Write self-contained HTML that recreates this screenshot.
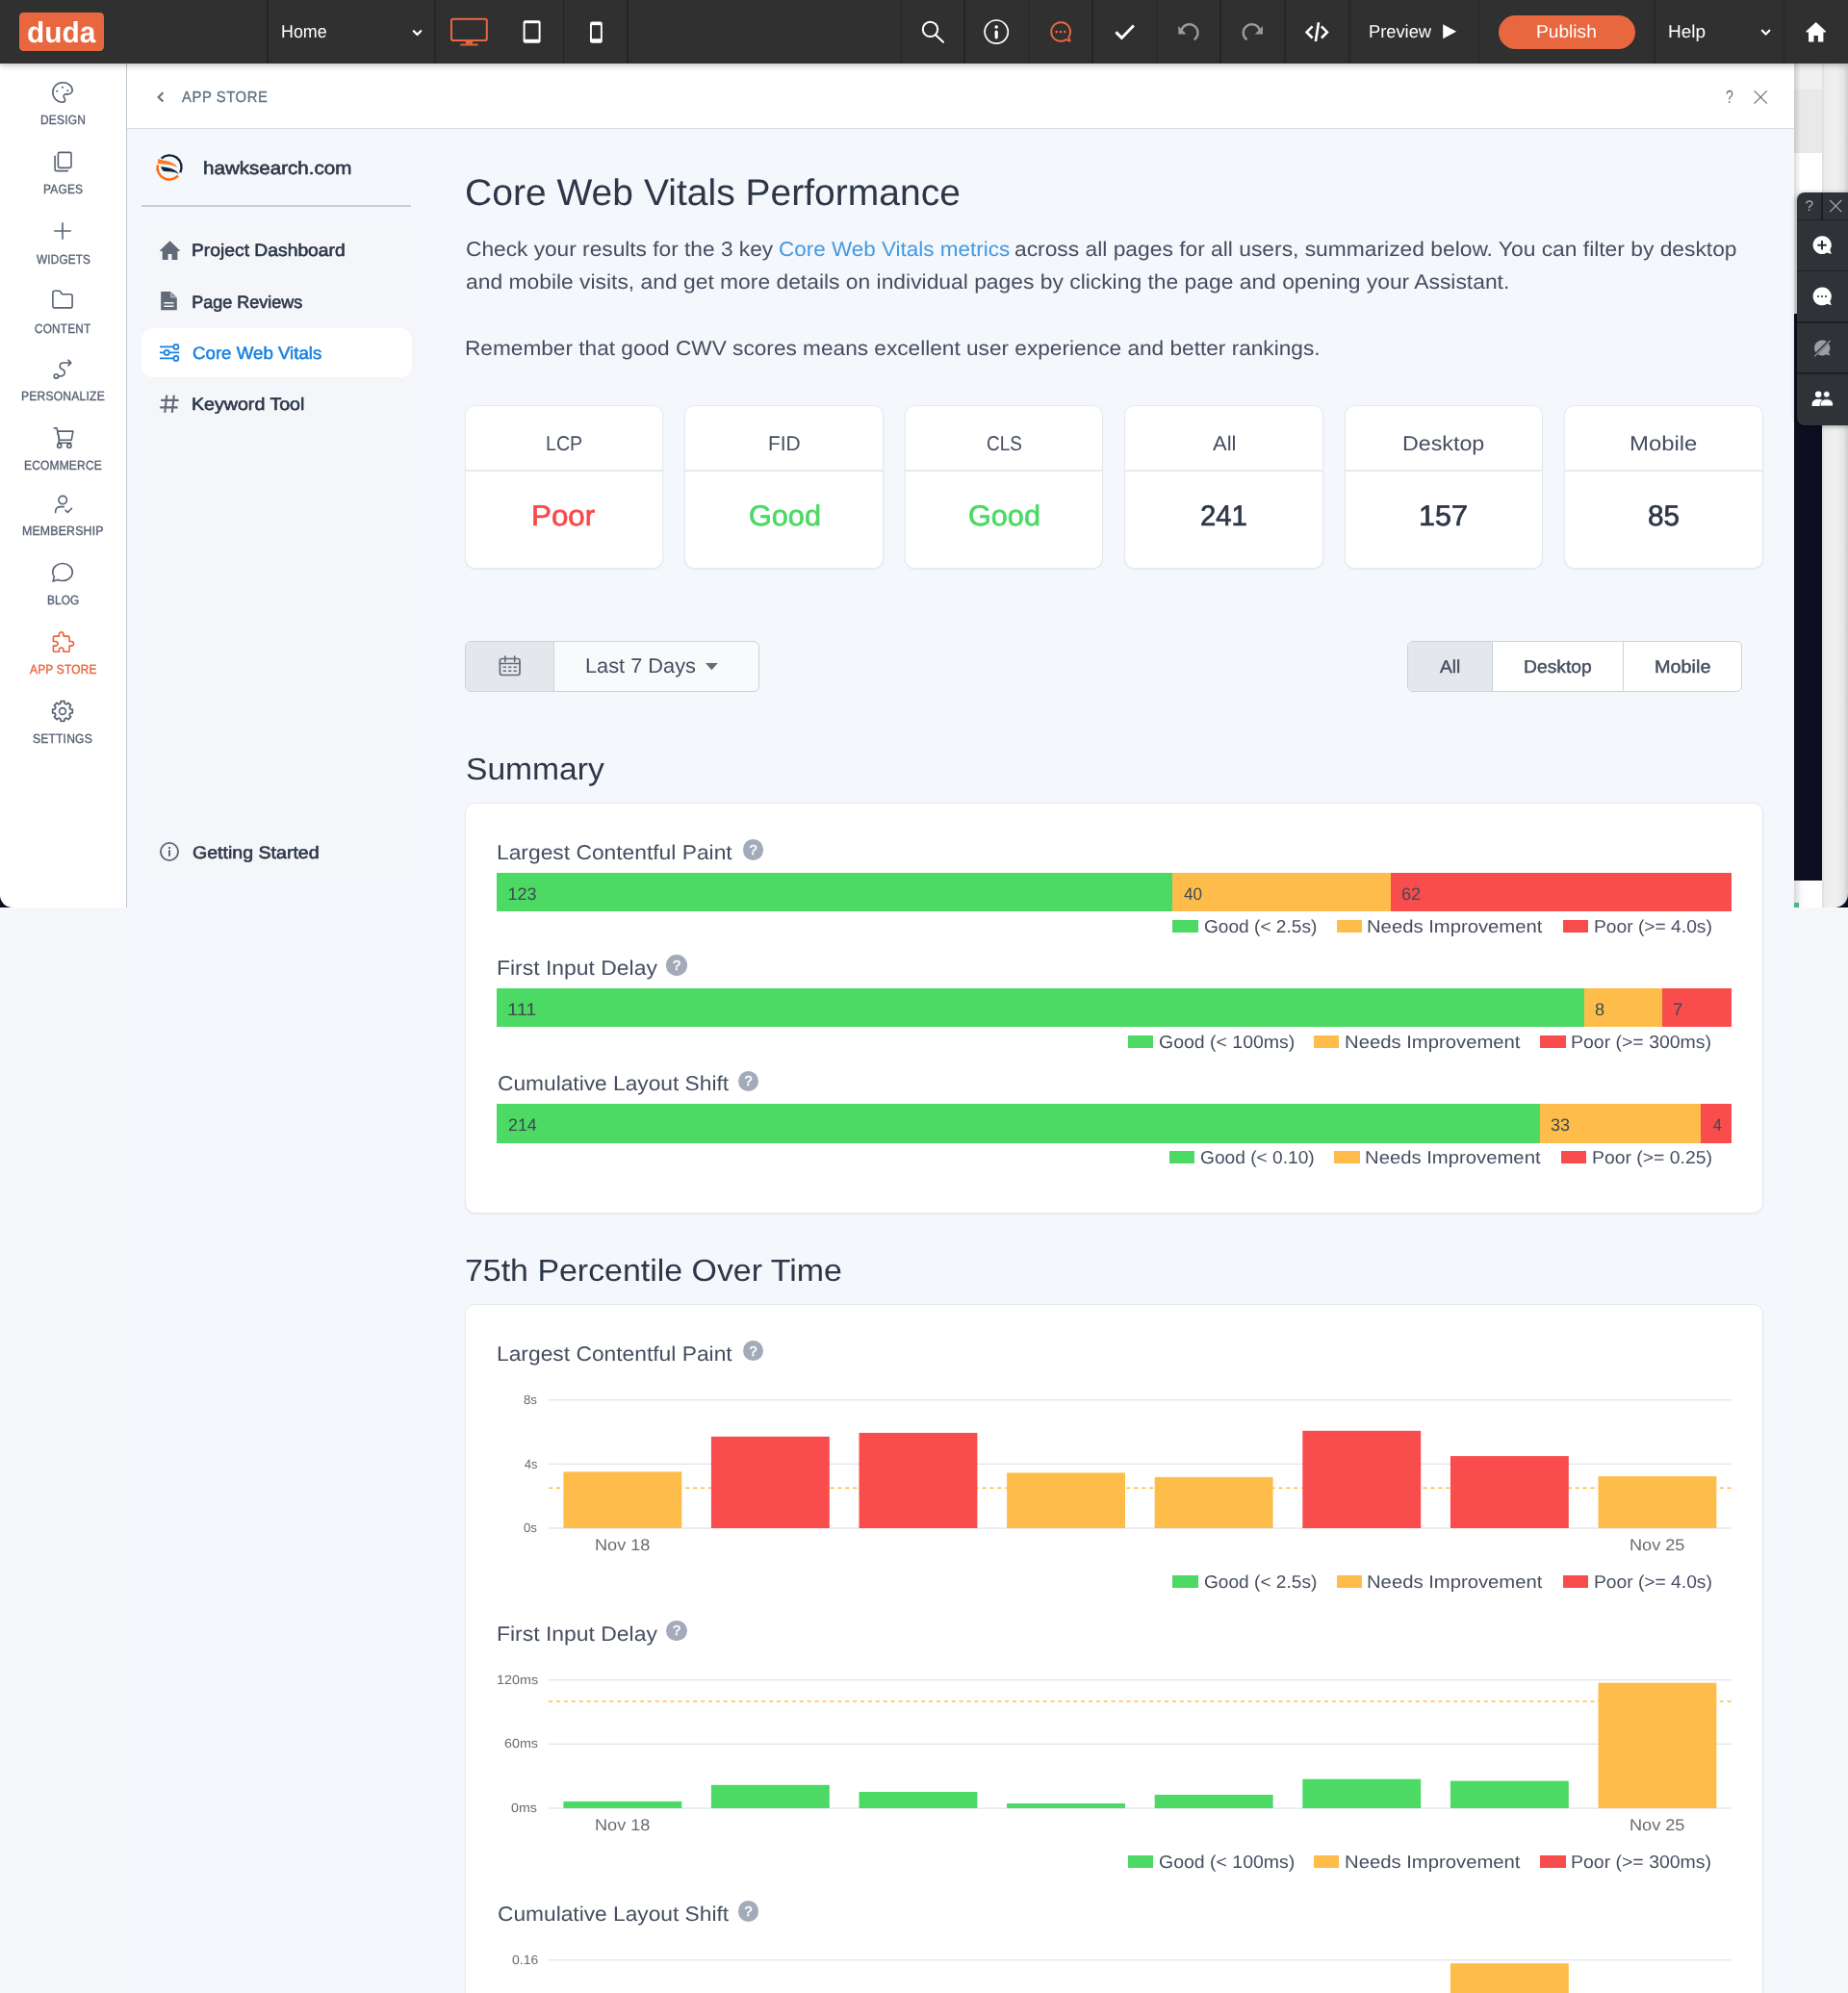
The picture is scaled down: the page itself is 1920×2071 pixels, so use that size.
<!DOCTYPE html>
<html lang="en"><head><meta charset="utf-8">
<title>Core Web Vitals Performance</title>
<style>
*{box-sizing:border-box}
html,body{margin:0;padding:0}
html,body{width:1920px;height:2071px;overflow:hidden;background:#f6f7fb}
#page{will-change:transform;width:1920px;height:2071px;position:relative;overflow:hidden;background:#f6f7fb;font-family:"Liberation Sans",sans-serif;text-rendering:geometricPrecision}
.g{display:contents}
.t{position:absolute;white-space:pre;line-height:1;display:block;transform-origin:0 0;margin:0;padding:0;border:0;background:none;font-family:inherit;font-weight:400;text-decoration:none;text-align:left;text-rendering:inherit;letter-spacing:normal;appearance:none;-webkit-appearance:none;cursor:default}
.a{position:absolute}
svg{position:absolute;overflow:visible}

</style></head>
<body>
<div id="page">
<div class="g" aria-hidden="true">
<div class="a" style="left:1864px;top:66px;width:56px;height:876.5px;background:#0d0e1f;overflow:hidden"><div class="a" style="left:0;top:0;width:29px;height:27px;background:#f0f0f0"></div><div class="a" style="left:0;top:26.600px;width:29px;height:66.400px;background:#e9e9e9"></div><div class="a" style="left:0;top:92.800px;width:29px;height:167.700px;background:#fff"></div><div class="a" style="left:0;top:0;width:7px;height:260.500px;background:linear-gradient(90deg,rgba(0,0,0,.14),rgba(0,0,0,0))"></div><div class="a" style="left:0;top:848.5px;width:29px;height:28px;background:linear-gradient(90deg,#d9d9d9 0,#fbfbfb 8px,#fff 12px)"></div><div class="a" style="left:0;top:872px;width:5px;height:4.5px;background:#46b98a"></div><div class="a" style="left:29px;top:0;width:27px;height:876.5px;background:linear-gradient(90deg,#dcdcdc 0,#ececec 3px,#f1f1f1 14px,#e6e6e6 22px,#cfcfcf 27px);border-bottom-right-radius:14px"></div></div>
<div class="a" style="left:132px;top:66px;width:1732px;height:2005px;background:#f4f7fb"></div>
<div class="a" style="left:1858px;top:66px;width:6px;height:876px;background:linear-gradient(90deg,rgba(244,247,250,0),rgba(220,226,232,.0))"></div>
<div class="a" style="left:132px;top:66px;width:1732px;height:68px;background:#fff;border-bottom:1.5px solid #d5dde3"></div>
</div>
<main class="g">
<h1 class="t" style="left:483.00px;top:182px;font-size:38.4px;color:#2d3748;transform:scaleX(1.0170);">Core Web Vitals Performance</h1>
<p class="t" style="left:483.54px;top:249px;font-size:21.33px;color:#454d5f;transform:scaleX(1.0642);">Check your results for the 3 key</p>
<a href="#" class="t" style="left:808.95px;top:249px;font-size:21.33px;color:#4299e1;transform:scaleX(1.0540);">Core Web Vitals metrics</a>
<span class="t" style="left:1054.36px;top:249px;font-size:21.33px;color:#454d5f;transform:scaleX(1.0694);">across all pages for all users, summarized below. You can filter by desktop</span>
<p class="t" style="left:483.56px;top:283px;font-size:21.33px;color:#454d5f;transform:scaleX(1.0709);">and mobile visits, and get more details on individual pages by clicking the page and opening your Assistant.</p>
<p class="t" style="left:483.14px;top:352px;font-size:21.33px;color:#454d5f;transform:scaleX(1.0616);">Remember that good CWV scores means excellent user experience and better rankings.</p>
<div class="a" style="left:483.00px;top:420.6px;width:206.4px;height:170.4px;background:#fff;border:1.3px solid #e5e8ee;border-radius:10.5px;box-shadow:0 1px 2px rgba(50,60,90,.06)"><div class="a" style="left:0;right:0;top:66.8px;height:1.4px;background:#e8eaf0"></div></div>
<span class="t" style="left:567.14px;top:451px;font-size:21.33px;color:#454d5f;transform:scaleX(0.9215);">LCP</span>
<span class="t" style="left:552.36px;top:522px;font-size:30.0px;color:#f84a4a;-webkit-text-stroke:0.7px #f84a4a;transform:scaleX(1.0450);">Poor</span>
<div class="a" style="left:711.44px;top:420.6px;width:206.4px;height:170.4px;background:#fff;border:1.3px solid #e5e8ee;border-radius:10.5px;box-shadow:0 1px 2px rgba(50,60,90,.06)"><div class="a" style="left:0;right:0;top:66.8px;height:1.4px;background:#e8eaf0"></div></div>
<span class="t" style="left:797.72px;top:451px;font-size:21.33px;color:#454d5f;transform:scaleX(0.9813);">FID</span>
<span class="t" style="left:777.67px;top:522px;font-size:30.0px;color:#4cd964;-webkit-text-stroke:0.7px #4cd964;transform:scaleX(1.0211);">Good</span>
<div class="a" style="left:939.88px;top:420.6px;width:206.4px;height:170.4px;background:#fff;border:1.3px solid #e5e8ee;border-radius:10.5px;box-shadow:0 1px 2px rgba(50,60,90,.06)"><div class="a" style="left:0;right:0;top:66.8px;height:1.4px;background:#e8eaf0"></div></div>
<span class="t" style="left:1024.94px;top:451px;font-size:21.33px;color:#454d5f;transform:scaleX(0.8899);">CLS</span>
<span class="t" style="left:1006.11px;top:522px;font-size:30.0px;color:#4cd964;-webkit-text-stroke:0.7px #4cd964;transform:scaleX(1.0211);">Good</span>
<div class="a" style="left:1168.32px;top:420.6px;width:206.4px;height:170.4px;background:#fff;border:1.3px solid #e5e8ee;border-radius:10.5px;box-shadow:0 1px 2px rgba(50,60,90,.06)"><div class="a" style="left:0;right:0;top:66.8px;height:1.4px;background:#e8eaf0"></div></div>
<span class="t" style="left:1260.32px;top:451px;font-size:21.33px;color:#454d5f;transform:scaleX(1.0311);">All</span>
<span class="t" style="left:1247.39px;top:522px;font-size:30.0px;color:#2f3748;-webkit-text-stroke:0.7px #2f3748;transform:scaleX(0.9771);">241</span>
<div class="a" style="left:1396.76px;top:420.6px;width:206.4px;height:170.4px;background:#fff;border:1.3px solid #e5e8ee;border-radius:10.5px;box-shadow:0 1px 2px rgba(50,60,90,.06)"><div class="a" style="left:0;right:0;top:66.8px;height:1.4px;background:#e8eaf0"></div></div>
<span class="t" style="left:1457.10px;top:451px;font-size:21.33px;color:#454d5f;transform:scaleX(1.0901);">Desktop</span>
<span class="t" style="left:1474.35px;top:522px;font-size:30.0px;color:#2f3748;-webkit-text-stroke:0.7px #2f3748;transform:scaleX(1.0176);">157</span>
<div class="a" style="left:1625.20px;top:420.6px;width:206.4px;height:170.4px;background:#fff;border:1.3px solid #e5e8ee;border-radius:10.5px;box-shadow:0 1px 2px rgba(50,60,90,.06)"><div class="a" style="left:0;right:0;top:66.8px;height:1.4px;background:#e8eaf0"></div></div>
<span class="t" style="left:1692.99px;top:451px;font-size:21.33px;color:#454d5f;transform:scaleX(1.1203);">Mobile</span>
<span class="t" style="left:1711.88px;top:522px;font-size:30.0px;color:#2f3748;-webkit-text-stroke:0.7px #2f3748;transform:scaleX(0.9901);">85</span>
<div class="a" style="left:483.1px;top:665.6px;width:305.6px;height:53.2px;background:#f8fafc;border:1.4px solid #cdd2da;border-radius:6px;overflow:hidden"><div class="a" style="left:0;top:0;width:91.5px;height:100%;background:#e4e7ec;border-right:1.4px solid #cdd2da"></div></div>
<button type="button" class="t" style="left:608.42px;top:682px;font-size:21.33px;color:#454d5f;transform:scaleX(1.0204);">Last 7 Days</button>
<svg style="left:516px;top:680px" width="28" height="24" viewBox="516 680 28 24" fill="none" stroke="#646b7a" stroke-width="1.700"><rect x="519.400" y="684.500" width="20.600" height="17" rx="2.200"/><path d="M519.400 689.500h20.600M524.800 682.100v5.200M534.700 682.100v5.200" stroke-linecap="round"/><path d="M522.700 693.200h3.200M528.100 693.200h3.200M533.600 693.200h3.200M522.700 697.300h3.200M528.100 697.300h3.200M533.600 697.300h3.200" stroke-width="1.600"/></svg>
<svg style="left:733px;top:689.3px" width="12.8" height="7.2" viewBox="0 0 12.8 7.2"><path d="M0 0h12.8L6.4 7.2z" fill="#666b75"/></svg>
<div class="a" style="left:1462.4px;top:665.6px;width:348px;height:53.2px;background:#fff;border:1.4px solid #cdd2da;border-radius:6px;overflow:hidden"><div class="a" style="left:0;top:0;width:87.2px;height:100%;background:#e4e7ec;border-right:1.4px solid #cdd2da"></div><div class="a" style="left:222.6px;top:0;width:1.4px;height:100%;background:#cdd2da"></div></div>
<button type="button" class="t" style="left:1496.11px;top:684px;font-size:18.67px;color:#454d5f;-webkit-text-stroke:0.45px #454d5f;transform:scaleX(1.0218);">All</button>
<button type="button" class="t" style="left:1582.67px;top:684px;font-size:18.67px;color:#454d5f;-webkit-text-stroke:0.45px #454d5f;transform:scaleX(1.0328);">Desktop</button>
<button type="button" class="t" style="left:1718.84px;top:684px;font-size:18.67px;color:#454d5f;-webkit-text-stroke:0.45px #454d5f;transform:scaleX(1.0638);">Mobile</button>
<h2 class="t" style="left:483.63px;top:783px;font-size:32.0px;color:#2d3748;transform:scaleX(1.0494);">Summary</h2>
<div class="a" style="left:483px;top:834.4px;width:1348.6px;height:426.2px;background:#fff;border:1.3px solid #e5e8ee;border-radius:10.5px;box-shadow:0 1px 2px rgba(50,60,90,.06)"></div>
<h2 class="t" style="left:483.36px;top:1304px;font-size:32.0px;color:#2d3748;transform:scaleX(1.0592);">75th Percentile Over Time</h2>
<div class="a" style="left:483px;top:1355.2px;width:1348.6px;height:760px;background:#fff;border:1.3px solid #e5e8ee;border-radius:10.5px;box-shadow:0 1px 2px rgba(50,60,90,.06)"></div>
<h3 class="t" style="left:516.23px;top:876px;font-size:21.33px;color:#454d5f;transform:scaleX(1.0693);">Largest Contentful Paint</h3>
<div class="a" style="left:771.9px;top:872.2px;width:21.4px;height:21.4px;border-radius:50%;background:#a3abba"></div>
<span class="t" style="left:778.60px;top:877px;font-size:14.5px;color:#fff;-webkit-text-stroke:0.5px #fff;">?</span>
<div class="a" style="left:516.3px;top:907.0px;width:701.3px;height:40.2px;background:#4cd964"></div>
<span class="t" style="left:527.50px;top:920px;font-size:18.0px;color:#3d4a52;">123</span>
<div class="a" style="left:1217.6px;top:907.0px;width:227.6px;height:40.2px;background:#febd4b"></div>
<span class="t" style="left:1229.80px;top:920px;font-size:18.0px;color:#3d4a52;transform:scaleX(0.9494);">40</span>
<div class="a" style="left:1445.2px;top:907.0px;width:353.4px;height:40.2px;background:#f94c4c"></div>
<span class="t" style="left:1456.41px;top:920px;font-size:18.0px;color:#3d4a52;transform:scaleX(1.0092);">62</span>
<div class="a" style="left:1218.4px;top:955.8px;width:26.4px;height:13.3px;background:#4cd964"></div>
<span class="t" style="left:1250.51px;top:954px;font-size:18.67px;color:#454d5f;transform:scaleX(1.0236);">Good (&lt; 2.5s)</span>
<div class="a" style="left:1388.5px;top:955.8px;width:26.4px;height:13.3px;background:#febd4b"></div>
<span class="t" style="left:1420.13px;top:954px;font-size:18.67px;color:#454d5f;transform:scaleX(1.0855);">Needs Improvement</span>
<div class="a" style="left:1623.8px;top:955.8px;width:26.4px;height:13.3px;background:#f94c4c"></div>
<span class="t" style="left:1655.62px;top:954px;font-size:18.67px;color:#454d5f;transform:scaleX(1.0301);">Poor (&gt;= 4.0s)</span>
<h3 class="t" style="left:516.22px;top:996px;font-size:21.33px;color:#454d5f;transform:scaleX(1.0746);">First Input Delay</h3>
<div class="a" style="left:692.4px;top:992.4000000000001px;width:21.4px;height:21.4px;border-radius:50%;background:#a3abba"></div>
<span class="t" style="left:699.10px;top:997px;font-size:14.5px;color:#fff;-webkit-text-stroke:0.5px #fff;">?</span>
<div class="a" style="left:516.3px;top:1027.2px;width:1129.4px;height:40.2px;background:#4cd964"></div>
<span class="t" style="left:527.39px;top:1040px;font-size:18.0px;color:#3d4a52;transform:scaleX(1.1114);">111</span>
<div class="a" style="left:1645.7px;top:1027.2px;width:81.5px;height:40.2px;background:#febd4b"></div>
<span class="t" style="left:1657.07px;top:1040px;font-size:18.0px;color:#3d4a52;transform:scaleX(1.0047);">8</span>
<div class="a" style="left:1727.2px;top:1027.2px;width:71.4px;height:40.2px;background:#f94c4c"></div>
<span class="t" style="left:1738.45px;top:1040px;font-size:18.0px;color:#3d4a52;transform:scaleX(1.0259);">7</span>
<div class="a" style="left:1171.5px;top:1076.0px;width:26.4px;height:13.3px;background:#4cd964"></div>
<span class="t" style="left:1203.89px;top:1074px;font-size:18.67px;color:#454d5f;transform:scaleX(1.0439);">Good (&lt; 100ms)</span>
<div class="a" style="left:1364.8px;top:1076.0px;width:26.4px;height:13.3px;background:#febd4b"></div>
<span class="t" style="left:1396.53px;top:1074px;font-size:18.67px;color:#454d5f;transform:scaleX(1.0861);">Needs Improvement</span>
<div class="a" style="left:1600.4px;top:1076.0px;width:26.4px;height:13.3px;background:#f94c4c"></div>
<span class="t" style="left:1632.20px;top:1074px;font-size:18.67px;color:#454d5f;transform:scaleX(1.0432);">Poor (&gt;= 300ms)</span>
<h3 class="t" style="left:517.03px;top:1116px;font-size:21.33px;color:#454d5f;transform:scaleX(1.0660);">Cumulative Layout Shift</h3>
<div class="a" style="left:766.8px;top:1112.6000000000001px;width:21.4px;height:21.4px;border-radius:50%;background:#a3abba"></div>
<span class="t" style="left:773.50px;top:1117px;font-size:14.5px;color:#fff;-webkit-text-stroke:0.5px #fff;">?</span>
<div class="a" style="left:516.3px;top:1147.4px;width:1083.3px;height:40.2px;background:#4cd964"></div>
<span class="t" style="left:527.61px;top:1160px;font-size:18.0px;color:#3d4a52;transform:scaleX(0.9871);">214</span>
<div class="a" style="left:1599.6px;top:1147.4px;width:167.7px;height:40.2px;background:#febd4b"></div>
<span class="t" style="left:1610.90px;top:1160px;font-size:18.0px;color:#3d4a52;">33</span>
<div class="a" style="left:1767.3px;top:1147.4px;width:31.3px;height:40.2px;background:#f94c4c"></div>
<span class="t" style="left:1779.50px;top:1160px;font-size:18.0px;color:#3d4a52;transform:scaleX(0.8866);">4</span>
<div class="a" style="left:1214.7px;top:1196.2px;width:26.4px;height:13.3px;background:#4cd964"></div>
<span class="t" style="left:1247.11px;top:1194px;font-size:18.67px;color:#454d5f;transform:scaleX(1.0269);">Good (&lt; 0.10)</span>
<div class="a" style="left:1386.2px;top:1196.2px;width:26.4px;height:13.3px;background:#febd4b"></div>
<span class="t" style="left:1417.83px;top:1194px;font-size:18.67px;color:#454d5f;transform:scaleX(1.0867);">Needs Improvement</span>
<div class="a" style="left:1621.8px;top:1196.2px;width:26.4px;height:13.3px;background:#f94c4c"></div>
<span class="t" style="left:1653.50px;top:1194px;font-size:18.67px;color:#454d5f;transform:scaleX(1.0392);">Poor (&gt;= 0.25)</span>
</main>
<section class="g" aria-label="75th Percentile Over Time">
<h3 class="t" style="left:516.23px;top:1397px;font-size:21.33px;color:#454d5f;transform:scaleX(1.0693);">Largest Contentful Paint</h3>
<div class="a" style="left:771.9px;top:1393.0px;width:21.4px;height:21.4px;border-radius:50%;background:#a3abba"></div>
<span class="t" style="left:778.60px;top:1398px;font-size:14.5px;color:#fff;-webkit-text-stroke:0.5px #fff;">?</span>
<svg style="left:0;top:1440.0px" width="1920" height="220" viewBox="0 1440.0 1920 220"><rect x="570.0" y="1454.0" width="1228.7" height="1.4" fill="#e4e6ee"/><rect x="570.0" y="1520.6" width="1228.7" height="1.4" fill="#e4e6ee"/><rect x="570.0" y="1587.3" width="1228.7" height="1.4" fill="#e4e6ee"/><path d="M570.0 1546.2H1798.7" stroke="#febd4b" stroke-width="1.4" stroke-dasharray="4.2 3.7" fill="none"/><rect x="585.4" y="1529.4" width="122.9" height="58.6" fill="#febd4b"/><rect x="738.9" y="1492.8" width="122.9" height="95.2" fill="#f94c4c"/><rect x="892.5" y="1488.9" width="122.9" height="99.1" fill="#f94c4c"/><rect x="1046.1" y="1530.4" width="122.9" height="57.6" fill="#febd4b"/><rect x="1199.7" y="1534.9" width="122.9" height="53.1" fill="#febd4b"/><rect x="1353.3" y="1486.8" width="122.9" height="101.2" fill="#f94c4c"/><rect x="1506.9" y="1513.1" width="122.9" height="74.9" fill="#f94c4c"/><rect x="1660.5" y="1534.1" width="122.9" height="53.9" fill="#febd4b"/></svg>
<span class="t" style="left:544.08px;top:1448px;font-size:13.33px;color:#6b6b6b;transform:scaleX(0.9946);">8s</span>
<span class="t" style="left:544.70px;top:1515px;font-size:13.33px;color:#6b6b6b;transform:scaleX(0.9500);">4s</span>
<span class="t" style="left:544.16px;top:1581px;font-size:13.33px;color:#6b6b6b;transform:scaleX(0.9885);">0s</span>
<span class="t" style="left:617.82px;top:1598px;font-size:16.9px;color:#6b6b6b;transform:scaleX(1.0731);">Nov 18</span>
<span class="t" style="left:1692.93px;top:1598px;font-size:16.9px;color:#6b6b6b;transform:scaleX(1.0731);">Nov 25</span>
<div class="a" style="left:1218.4px;top:1636.9px;width:26.4px;height:13.3px;background:#4cd964"></div>
<span class="t" style="left:1250.51px;top:1635px;font-size:18.67px;color:#454d5f;transform:scaleX(1.0236);">Good (&lt; 2.5s)</span>
<div class="a" style="left:1388.5px;top:1636.9px;width:26.4px;height:13.3px;background:#febd4b"></div>
<span class="t" style="left:1420.13px;top:1635px;font-size:18.67px;color:#454d5f;transform:scaleX(1.0855);">Needs Improvement</span>
<div class="a" style="left:1623.8px;top:1636.9px;width:26.4px;height:13.3px;background:#f94c4c"></div>
<span class="t" style="left:1655.62px;top:1635px;font-size:18.67px;color:#454d5f;transform:scaleX(1.0301);">Poor (&gt;= 4.0s)</span>
<h3 class="t" style="left:516.22px;top:1688px;font-size:21.33px;color:#454d5f;transform:scaleX(1.0746);">First Input Delay</h3>
<div class="a" style="left:692.4px;top:1683.7px;width:21.4px;height:21.4px;border-radius:50%;background:#a3abba"></div>
<span class="t" style="left:699.10px;top:1688px;font-size:14.5px;color:#fff;-webkit-text-stroke:0.5px #fff;">?</span>
<svg style="left:0;top:1730.7px" width="1920" height="220" viewBox="0 1730.7 1920 220"><rect x="570.0" y="1744.7" width="1228.7" height="1.4" fill="#e4e6ee"/><rect x="570.0" y="1811.3" width="1228.7" height="1.4" fill="#e4e6ee"/><rect x="570.0" y="1878.0" width="1228.7" height="1.4" fill="#e4e6ee"/><path d="M570.0 1767.7H1798.7" stroke="#febd4b" stroke-width="1.4" stroke-dasharray="4.2 3.7" fill="none"/><rect x="585.4" y="1871.6" width="122.9" height="7.1" fill="#4cd964"/><rect x="738.9" y="1854.5" width="122.9" height="24.2" fill="#4cd964"/><rect x="892.5" y="1861.7" width="122.9" height="17.0" fill="#4cd964"/><rect x="1046.1" y="1873.7" width="122.9" height="5.0" fill="#4cd964"/><rect x="1199.7" y="1864.7" width="122.9" height="14.0" fill="#4cd964"/><rect x="1353.3" y="1848.4" width="122.9" height="30.3" fill="#4cd964"/><rect x="1506.9" y="1850.3" width="122.9" height="28.4" fill="#4cd964"/><rect x="1660.5" y="1748.4" width="122.9" height="130.3" fill="#febd4b"/></svg>
<span class="t" style="left:515.62px;top:1739px;font-size:13.33px;color:#6b6b6b;transform:scaleX(1.0772);">120ms</span>
<span class="t" style="left:523.54px;top:1805px;font-size:13.33px;color:#6b6b6b;transform:scaleX(1.0735);">60ms</span>
<span class="t" style="left:531.32px;top:1872px;font-size:13.33px;color:#6b6b6b;transform:scaleX(1.0673);">0ms</span>
<span class="t" style="left:617.82px;top:1889px;font-size:16.9px;color:#6b6b6b;transform:scaleX(1.0731);">Nov 18</span>
<span class="t" style="left:1692.93px;top:1889px;font-size:16.9px;color:#6b6b6b;transform:scaleX(1.0731);">Nov 25</span>
<div class="a" style="left:1171.5px;top:1927.6px;width:26.4px;height:13.3px;background:#4cd964"></div>
<span class="t" style="left:1203.89px;top:1926px;font-size:18.67px;color:#454d5f;transform:scaleX(1.0439);">Good (&lt; 100ms)</span>
<div class="a" style="left:1364.8px;top:1927.6px;width:26.4px;height:13.3px;background:#febd4b"></div>
<span class="t" style="left:1396.53px;top:1926px;font-size:18.67px;color:#454d5f;transform:scaleX(1.0861);">Needs Improvement</span>
<div class="a" style="left:1600.4px;top:1927.6px;width:26.4px;height:13.3px;background:#f94c4c"></div>
<span class="t" style="left:1632.20px;top:1926px;font-size:18.67px;color:#454d5f;transform:scaleX(1.0432);">Poor (&gt;= 300ms)</span>
<h3 class="t" style="left:517.03px;top:1979px;font-size:21.33px;color:#454d5f;transform:scaleX(1.0660);">Cumulative Layout Shift</h3>
<div class="a" style="left:766.8px;top:1975.4px;width:21.4px;height:21.4px;border-radius:50%;background:#a3abba"></div>
<span class="t" style="left:773.50px;top:1980px;font-size:14.5px;color:#fff;-webkit-text-stroke:0.5px #fff;">?</span>
<svg style="left:0;top:2022.4px" width="1920" height="220" viewBox="0 2022.4 1920 220"><rect x="570.0" y="2036.4" width="1228.7" height="1.4" fill="#e4e6ee"/><rect x="570.0" y="2103.0" width="1228.7" height="1.4" fill="#e4e6ee"/><rect x="570.0" y="2169.7" width="1228.7" height="1.4" fill="#e4e6ee"/><path d="M570.0 2087.1H1798.7" stroke="#febd4b" stroke-width="1.4" stroke-dasharray="4.2 3.7" fill="none"/><rect x="585.4" y="2142.4" width="122.9" height="28.0" fill="#4cd964"/><rect x="738.9" y="2147.4" width="122.9" height="23.0" fill="#4cd964"/><rect x="892.5" y="2140.4" width="122.9" height="30.0" fill="#4cd964"/><rect x="1046.1" y="2152.4" width="122.9" height="18.0" fill="#4cd964"/><rect x="1199.7" y="2144.4" width="122.9" height="26.0" fill="#4cd964"/><rect x="1353.3" y="2130.4" width="122.9" height="40.0" fill="#4cd964"/><rect x="1506.9" y="2040.6" width="122.9" height="129.8" fill="#febd4b"/><rect x="1660.5" y="2138.4" width="122.9" height="32.0" fill="#4cd964"/></svg>
<span class="t" style="left:531.53px;top:2030px;font-size:13.33px;color:#6b6b6b;transform:scaleX(1.0488);">0.16</span>
</section>
<nav class="g" aria-label="Project">
<svg style="left:162px;top:94px" width="10" height="14" viewBox="0 0 10 14"><path d="M7.4 2.2 2.6 6.9l4.8 4.7" fill="none" stroke="#5f7380" stroke-width="2.1"/></svg>
<span class="t" style="left:189.43px;top:94px;font-size:16.0px;color:#5f7380;letter-spacing:0.6px;-webkit-text-stroke:0.3px #5f7380;transform:scaleX(0.9277);">APP STORE</span>
<span class="t" style="left:1792.56px;top:92px;font-size:19.0px;color:#5f7380;transform:scaleX(0.7387);">?</span>
<svg style="left:1821.6px;top:93.5px" width="14.4" height="14" viewBox="0 0 14.4 14"><path d="M.6.4 13.8 13.6M13.8.4.6 13.6" fill="none" stroke="#5f7380" stroke-width="1.25"/></svg>
<div class="a" style="left:147.3px;top:234px;width:284.7px;height:677px;background:#f5f6fa"></div>
<svg style="left:160.8px;top:158.5px" width="30" height="30" viewBox="-15 -15 30 30"><path d="M-8.3-9.3A12.4 12.4 0 0 1 11.3 5.2" fill="none" stroke="#14233a" stroke-width="2.4"/><path d="M-12.2-2.4A12.4 12.4 0 0 0 9 8.600" fill="none" stroke="#ff6a13" stroke-width="2.5"/><path d="M-11.7-9C-6-6.500 3-7.700 8.600 0 3-3.400-4-3-12.300-4.300z" fill="#ff7a1f"/><path d="M-8.700-1C-3 .600 4-.600 10.300 7 5 3.700-1 4.700-5.600 4-7.500 2.900-8.400 1.200-8.700-1z" fill="#14233a"/></svg>
<span class="t" style="left:211.22px;top:166px;font-size:19.0px;color:#2d3748;-webkit-text-stroke:0.6px #2d3748;transform:scaleX(1.0830);">hawksearch.com</span>
<div class="a" style="left:146.8px;top:213px;width:279.8px;height:1.7px;background:#c9ced9"></div>
<div class="a" style="left:146.8px;top:341.1px;width:281px;height:50.8px;background:#fff;border-radius:12px"></div>
<svg style="left:165.5px;top:249.5px" width="21" height="20" viewBox="0 0 21 20"><path d="M10.5.2.2 10.2v.9h2.5V20h5.9v-5.9h3.9V20h5.9v-8.9h2.4v-.9z" fill="#626a79"/></svg>
<a href="#" class="t" style="left:199.13px;top:251px;font-size:18.0px;color:#2d3748;-webkit-text-stroke:0.6px #2d3748;transform:scaleX(1.0713);">Project Dashboard</a>
<svg style="left:167.2px;top:303.4px" width="17" height="19.4" viewBox="0 0 17 19.4"><path d="M.2.1h10.3v6.2h6.3v13H.2z" fill="#626a79"/><path d="M11.1.4v5.3h5.3z" fill="#8a919e"/><path d="M3.3 11h10.2v1.5H3.3zm0 3.4h10.2v1.5H3.3z" fill="#f5f6fa"/></svg>
<a href="#" class="t" style="left:199.20px;top:305px;font-size:18.0px;color:#2d3748;-webkit-text-stroke:0.6px #2d3748;">Page Reviews</a>
<svg style="left:165px;top:356px" width="22" height="21" viewBox="0 0 22 21" fill="none" stroke="#1a82e2" stroke-width="1.75"><path d="M1 4.4h14.2M1 10.4h4M10.8 10.4h10.4M1 16.4h14.2"/><circle cx="17.9" cy="4.4" r="2.5"/><circle cx="8.2" cy="10.4" r="2.5"/><circle cx="17.9" cy="16.4" r="2.5"/></svg>
<a href="#" class="t" style="left:199.50px;top:358px;font-size:18.0px;color:#1a82e2;-webkit-text-stroke:0.55px #1a82e2;transform:scaleX(1.0382);">Core Web Vitals</a>
<svg style="left:165px;top:409px" width="22" height="22" viewBox="0 0 22 22" fill="none" stroke="#626a79" stroke-width="2.1"><path d="M8.3 1.6 6.3 19.8M15.8 1.6 13.8 19.8M2.2 6.9h18.4M1.2 14.4h18.4"/></svg>
<a href="#" class="t" style="left:199.11px;top:411px;font-size:18.0px;color:#2d3748;-webkit-text-stroke:0.6px #2d3748;transform:scaleX(1.0896);">Keyword Tool</a>
<svg style="left:165px;top:873.8px" width="22" height="22" viewBox="0 0 22 22"><circle cx="11" cy="11" r="9.1" fill="none" stroke="#626a79" stroke-width="1.9"/><path d="M10 9.300h2v6.500h-2zM10 5.900h2v2.100h-2z" fill="#626a79"/></svg>
<a href="#" class="t" style="left:199.51px;top:877px;font-size:18.0px;color:#2d3748;-webkit-text-stroke:0.6px #2d3748;transform:scaleX(1.0873);">Getting Started</a>
</nav>
<aside class="g" aria-label="Editor">
<div class="a" style="left:0;top:66px;width:14px;height:876.5px;background:#0d0e1f"></div>
<div class="a" style="left:0;top:66px;width:132px;height:876.5px;background:#fff;border-right:1.3px solid #c1cad1;border-bottom-left-radius:13px"></div>
<span class="t" style="left:41.97px;top:118px;font-size:13.33px;color:#586274;letter-spacing:0.2px;-webkit-text-stroke:0.35px #586274;transform:scaleX(0.8985);">DESIGN</span>
<span class="t" style="left:44.72px;top:190px;font-size:13.33px;color:#586274;letter-spacing:0.2px;-webkit-text-stroke:0.35px #586274;transform:scaleX(0.8976);">PAGES</span>
<span class="t" style="left:37.63px;top:263px;font-size:13.33px;color:#586274;letter-spacing:0.2px;-webkit-text-stroke:0.35px #586274;transform:scaleX(0.8821);">WIDGETS</span>
<span class="t" style="left:36.10px;top:335px;font-size:13.33px;color:#586274;letter-spacing:0.2px;-webkit-text-stroke:0.35px #586274;transform:scaleX(0.8879);">CONTENT</span>
<span class="t" style="left:21.76px;top:405px;font-size:13.33px;color:#586274;letter-spacing:0.2px;-webkit-text-stroke:0.35px #586274;transform:scaleX(0.9099);">PERSONALIZE</span>
<span class="t" style="left:24.82px;top:477px;font-size:13.33px;color:#586274;letter-spacing:0.2px;-webkit-text-stroke:0.35px #586274;transform:scaleX(0.8997);">ECOMMERCE</span>
<span class="t" style="left:22.90px;top:545px;font-size:13.33px;color:#586274;letter-spacing:0.2px;-webkit-text-stroke:0.35px #586274;transform:scaleX(0.9247);">MEMBERSHIP</span>
<span class="t" style="left:48.69px;top:617px;font-size:13.33px;color:#586274;letter-spacing:0.2px;-webkit-text-stroke:0.35px #586274;transform:scaleX(0.8814);">BLOG</span>
<span class="t" style="left:30.89px;top:689px;font-size:13.33px;color:#e8633a;letter-spacing:0.2px;-webkit-text-stroke:0.35px #e8633a;transform:scaleX(0.8969);">APP STORE</span>
<span class="t" style="left:34.22px;top:761px;font-size:13.33px;color:#586274;letter-spacing:0.2px;-webkit-text-stroke:0.35px #586274;transform:scaleX(0.9070);">SETTINGS</span>
</aside>
<div class="g" aria-hidden="true">
<svg style="left:53.4px;top:83.6px" width="24" height="24" viewBox="-12 -12 24 24" fill="none" stroke="#586274" stroke-width="1.6" stroke-linecap="round" stroke-linejoin="round"><path d="M0-10.2a10.2 10.2 0 1 0 0 20.4c1.7 0 2.6-1.3 2.6-2.5 0-.9-.4-1.5-.8-2-.4-.5-.7-1-.7-1.6 0-1.300 1.000-2.200 2.300-2.200H5.600C8.600 1.900 10.200-.600 10.200-2.100 10.200-6.700 5.700-10.200 0-10.200z"/><circle cx="-5.8" cy="-1.300" r="1.05" fill="#586274" stroke="none"/><circle cx="0" cy="-5.300" r="1.05" fill="#586274" stroke="none"/><circle cx="5.300" cy="-1.700" r="1.05" fill="#586274" stroke="none"/></svg>
<svg style="left:53.4px;top:156.3px" width="24" height="24" viewBox="-12 -12 24 24" fill="none" stroke="#586274" stroke-width="1.6" stroke-linecap="round" stroke-linejoin="round"><rect x="-4.6" y="-9.6" width="13.6" height="16" rx="1.6"/><path d="M-7.9-5.6V8.1a1.5 1.5 0 0 0 1.5 1.5H5.4"/></svg>
<svg style="left:53.4px;top:227.9px" width="24" height="24" viewBox="-12 -12 24 24" fill="none" stroke="#586274" stroke-width="1.6" stroke-linecap="round" stroke-linejoin="round"><path d="M0-8.2V8.2M-8.2 0H8.2"/></svg>
<svg style="left:53.4px;top:299.1px" width="24" height="24" viewBox="-12 -12 24 24" fill="none" stroke="#586274" stroke-width="1.6" stroke-linecap="round" stroke-linejoin="round"><path d="M-10.1-6.7a2 2 0 0 1 2-2h4.300c.700 0 1.300.300 1.700.900L-.4-5.200H8.100a2 2 0 0 1 2 2V6.900a2 2 0 0 1-2 2H-8.100a2 2 0 0 1-2-2z"/></svg>
<svg style="left:53.4px;top:371.8px" width="24" height="24" viewBox="-12 -12 24 24" fill="none" stroke="#586274" stroke-width="1.6" stroke-linecap="round" stroke-linejoin="round"><circle cx="-6.6" cy="6.900" r="2.200"/><path d="M-4.400 6.900H-1.800C.900 6.900 2.300 5.100 2.300 3.100 2.300 1.300 1.200.300-.300-.300-1.900-.900-2.800-2-2.800-3.500-2.800-5.600-1.300-7 1-7H8.700M5.900-9.800 8.900-7 5.900-4.200"/></svg>
<svg style="left:54.0px;top:442.5px" width="24" height="24" viewBox="-12 -12 24 24" fill="none" stroke="#586274" stroke-width="1.6" stroke-linecap="round" stroke-linejoin="round"><path d="M-9.6-10.1h2.600l.800 3.200M-6.200-6.900H9.900L8.200 2.300H-4.400zM-4.400 2.300-.0 2.300"/><path d="M-6.200-6.900-4.400 2.300-5.200 5.200H7.800"/><circle cx="-4.300" cy="8.200" r="2.100"/><circle cx="5.900" cy="8.200" r="2.100"/></svg>
<svg style="left:53.4px;top:512.0px" width="24" height="24" viewBox="-12 -12 24 24" fill="none" stroke="#586274" stroke-width="1.6" stroke-linecap="round" stroke-linejoin="round"><circle cx="0.200" cy="-4.400" r="4.200"/><path d="M-7.300 8.600V7.200c0-2.700 2.200-4.600 5-4.600H1.400"/><path d="M3 6.200 5.300 8.500 9.500 4.300"/></svg>
<svg style="left:53.4px;top:582.6px" width="24" height="24" viewBox="-12 -12 24 24" fill="none" stroke="#586274" stroke-width="1.6" stroke-linecap="round" stroke-linejoin="round"><path d="M0-9.500c5.700 0 10.300 4 10.300 9S5.700 8.500 0 8.500c-1.700 0-3.300-.300-4.700-1L-10 9.100l1.400-4.600C-9.700 3.100-10.300 1.400-10.300-.500c0-5 4.600-9 10.300-9z"/></svg>
<svg style="left:53.9px;top:655.1px" width="24" height="24" viewBox="-12 -12 24 24" fill="none" stroke="#e8633a" stroke-width="1.6" stroke-linecap="round" stroke-linejoin="round"><path d="M-9.200-5.900H-4.600V-7.300a2.300 2.900 0 0 1 4.600 0V-5.900H4.700a1.400 1.400 0 0 1 1.400 1.400V-.500H7.700a2.900 2.300 0 0 1 0 4.600H6.100V8.900a1.400 1.400 0 0 1-1.400 1.400H0V8.700a2.300 2.700 0 0 0-4.600 0V10.300H-9.200a1.400 1.400 0 0 1-1.400-1.400V4.100H-8.600a2.700 2.300 0 0 0 0-4.600H-10.600V-4.500a1.400 1.400 0 0 1 1.400-1.400z"/></svg>
<svg style="left:53.4px;top:726.7px" width="24" height="24" viewBox="-12 -12 24 24" fill="none" stroke="#586274" stroke-width="1.6" stroke-linecap="round" stroke-linejoin="round"><path d="M-1.91 -10.32L1.91 -10.32L2.12 -7.92L4.10 -7.10L5.95 -8.65L8.65 -5.95L7.10 -4.10L7.92 -2.12L10.32 -1.91L10.32 1.91L7.92 2.12L7.10 4.10L8.65 5.95L5.95 8.65L4.10 7.10L2.12 7.92L1.91 10.32L-1.91 10.32L-2.12 7.92L-4.10 7.10L-5.95 8.65L-8.65 5.95L-7.10 4.10L-7.92 2.12L-10.32 1.91L-10.32 -1.91L-7.92 -2.12L-7.10 -4.10L-8.65 -5.95L-5.95 -8.65L-4.10 -7.10L-2.12 -7.92z" stroke-linejoin="round" stroke-width="1.7"/><circle cx="0" cy="0" r="3.400"/></svg>
</div>
<header class="g">
<div class="a" style="left:0;top:0;width:1920px;height:66px;background:#303030;box-shadow:0 1px 7px rgba(0,0,0,.32)"></div>
<div class="a" style="left:277.2px;top:0;width:1.6px;height:66px;background:#262626"></div>
<div class="a" style="left:451.2px;top:0;width:1.6px;height:66px;background:#262626"></div>
<div class="a" style="left:584.7px;top:0;width:1.6px;height:66px;background:#262626"></div>
<div class="a" style="left:651.2px;top:0;width:1.6px;height:66px;background:#262626"></div>
<div class="a" style="left:935.7px;top:0;width:1.6px;height:66px;background:#262626"></div>
<div class="a" style="left:1001.2px;top:0;width:1.6px;height:66px;background:#262626"></div>
<div class="a" style="left:1067.7px;top:0;width:1.6px;height:66px;background:#262626"></div>
<div class="a" style="left:1134.2px;top:0;width:1.6px;height:66px;background:#262626"></div>
<div class="a" style="left:1200.7px;top:0;width:1.6px;height:66px;background:#262626"></div>
<div class="a" style="left:1267.2px;top:0;width:1.6px;height:66px;background:#262626"></div>
<div class="a" style="left:1334.2px;top:0;width:1.6px;height:66px;background:#262626"></div>
<div class="a" style="left:1401.2px;top:0;width:1.6px;height:66px;background:#262626"></div>
<div class="a" style="left:1535.7px;top:0;width:1.6px;height:66px;background:#262626"></div>
<div class="a" style="left:1718.2px;top:0;width:1.6px;height:66px;background:#262626"></div>
<div class="a" style="left:1852.7px;top:0;width:1.6px;height:66px;background:#262626"></div>
<div class="a" style="left:20.1px;top:13.1px;width:88.1px;height:39.9px;border-radius:4.5px;background:#e8673f"></div>
<span class="t" style="left:27.82px;top:19px;font-size:30.5px;color:#fff;font-weight:700;transform:scaleX(0.9784);">duda</span>
<span class="t" style="left:291.63px;top:24px;font-size:18.67px;color:#fff;transform:scaleX(0.9583);">Home</span>
<span class="t" style="left:1422.39px;top:24px;font-size:18.67px;color:#fff;transform:scaleX(0.9805);">Preview</span>
<div class="a" style="left:1557px;top:15.5px;width:142px;height:35px;border-radius:18px;background:#e8673f"></div>
<button type="button" class="t" style="left:1596.22px;top:24px;font-size:18.67px;color:#fff;transform:scaleX(1.0263);">Publish</button>
<span class="t" style="left:1733.03px;top:24px;font-size:18.67px;color:#fff;transform:scaleX(1.0202);">Help</span>
</header>
<div class="g" aria-hidden="true">
<svg style="left:0;top:0" width="1920" height="66" viewBox="0 0 1920 66" fill="none" stroke-linecap="round" stroke-linejoin="round" ><path d="M429.8 32.300 433.5 36 437.200 32.300" stroke="#fff" stroke-width="2.3"/><path d="M1830.9 31.800 1834.6 35.500 1838.300 31.800" stroke="#fff" stroke-width="2.3"/><rect x="469" y="19.700" width="36.800" height="22.400" rx="1.800" stroke="#e8673f" stroke-width="2"/><path d="M483.800 42.300h7.200v3.400h-7.200z" fill="#e8673f" stroke="none"/><path d="M478.400 46.500h18.200" stroke="#e8673f" stroke-width="1.900" stroke-linecap="butt"/><rect x="543.600" y="21.300" width="18" height="23.400" rx="2.200" fill="#fff"/><rect x="545.600" y="24.200" width="14" height="16.600" fill="#303030"/><rect x="613" y="22.600" width="12.800" height="22.200" rx="2.200" fill="#fff"/><rect x="614.900" y="26.200" width="9" height="14" fill="#303030"/><circle cx="966.500" cy="30.400" r="7.700" stroke="#fff" stroke-width="2"/><path d="M972.300 36.500 980 43.700" stroke="#fff" stroke-width="2.100"/><circle cx="1035.200" cy="33.100" r="12.100" stroke="#fff" stroke-width="1.700"/><circle cx="1035.200" cy="28" r="1.800" fill="#fff"/><path d="M1035.200 33.200v5.600" stroke="#fff" stroke-width="3.200"/><path d="M1102 23.200a9.800 9.800 0 1 0 5.600 17.900l3.900 1.500-1.200-4.100A9.800 9.800 0 0 0 1102 23.200z" stroke="#e8673f" stroke-width="2"/><circle cx="1097.700" cy="33.100" r="1.300" fill="#e8673f"/><circle cx="1102" cy="33.100" r="1.300" fill="#e8673f"/><circle cx="1106.300" cy="33.100" r="1.300" fill="#e8673f"/><path d="M1159.400 33.400 1165.400 39.400 1177.900 26.400" stroke="#fff" stroke-width="2.900" stroke-linecap="butt" stroke-linejoin="miter"/><path d="M1227.400 31.600A8.700 8.700 0 1 1 1240.600 41.200" stroke="#9a9a9a" stroke-width="2.400" stroke-linecap="butt"/><path d="M1224.300 27v8.600h8.200z" fill="#9a9a9a"/><path d="M1308.850 31.600A8.700 8.700 0 1 0 1295.650 41.200" stroke="#9a9a9a" stroke-width="2.400" stroke-linecap="butt"/><path d="M1311.950 27v8.600h-8.200z" fill="#9a9a9a"/><path d="M1363.600 27.300 1357.600 33.400 1363.600 39.500M1372.900 27.300 1378.900 33.400 1372.900 39.500M1370 23.300 1366.900 43" stroke="#fff" stroke-width="2.600" stroke-linecap="butt" stroke-linejoin="miter"/><path d="M1499.200 25.300 1513.100 32.800 1499.200 40.200z" fill="#fff"/><path d="M1886.700 23 1876.400 32.600v.8h2.600v10.200h5.500v-6.700h4.400v6.700h5.500V33.400h2.600v-.8z" fill="#fff"/></svg>
</div>
<div class="g" role="toolbar" aria-label="Comments">
<div class="a" style="left:1866.600px;top:200px;width:60px;height:241.500px;background:#2f3337;border-radius:8px;box-shadow:-1px 1px 5px rgba(0,0,0,.35);overflow:hidden"><div class="a" style="left:0;top:27.600px;width:60px;height:1.500px;background:#1d2023"></div><div class="a" style="left:25.900px;top:0;width:1.500px;height:28px;background:#1d2023"></div><div class="a" style="left:0;top:80.600px;width:60px;height:1.500px;background:#1d2023"></div><div class="a" style="left:0;top:134px;width:60px;height:1.500px;background:#1d2023"></div><div class="a" style="left:0;top:187.400px;width:60px;height:1.500px;background:#1d2023"></div></div>
<span class="t" style="left:1875.46px;top:207px;font-size:15.5px;color:#a8adb3;">?</span>
<svg style="left:1860px;top:195px" width="60" height="250" viewBox="1860 195 60 250" fill="none"><path d="M1901.200 208 1913.300 220.100M1913.300 208 1901.200 220.100" stroke="#a8adb3" stroke-width="1.100"/><path d="M1893 245.200a9.400 9.400 0 1 0 5.200 17.200l4.600 1.600-1.500-4.400A9.400 9.400 0 0 0 1893 245.200z" fill="#fff"/><path d="M1893 250v9.400M1888.300 254.700h9.400" stroke="#2f3337" stroke-width="2"/><path d="M1893 298.500a9.400 9.400 0 1 0 5.200 17.200l4.600 1.600-1.500-4.400A9.400 9.400 0 0 0 1893 298.500z" fill="#fff"/><circle cx="1889" cy="308" r="1.100" fill="#2f3337"/><circle cx="1893" cy="308" r="1.100" fill="#2f3337"/><circle cx="1897" cy="308" r="1.100" fill="#2f3337"/><path d="M1893 353.600a8 8 0 1 0 4.400 14.700l3.900 1.300-1.300-3.700A8 8 0 0 0 1893 353.600z" fill="#9b9ea2"/><path d="M1885 369.800 1901.500 353.300" stroke="#2f3337" stroke-width="3"/><path d="M1885.200 370.300 1901.700 353.800" stroke="#9b9ea2" stroke-width="1.200"/><circle cx="1889.200" cy="409.800" r="3.300" fill="#fff"/><path d="M1882.600 422v-2.200c0-3 2.900-5 6.600-5s6.600 2 6.600 5v2.200z" fill="#fff"/><circle cx="1897.800" cy="409.800" r="3.300" fill="#fff" stroke="#2f3337" stroke-width=".8"/><path d="M1891.200 422v-2.200c0-3 2.900-5 6.600-5s6.600 2 6.600 5v2.200z" fill="#fff" stroke="#2f3337" stroke-width=".8"/></svg>
</div>
</div>
</body></html>
